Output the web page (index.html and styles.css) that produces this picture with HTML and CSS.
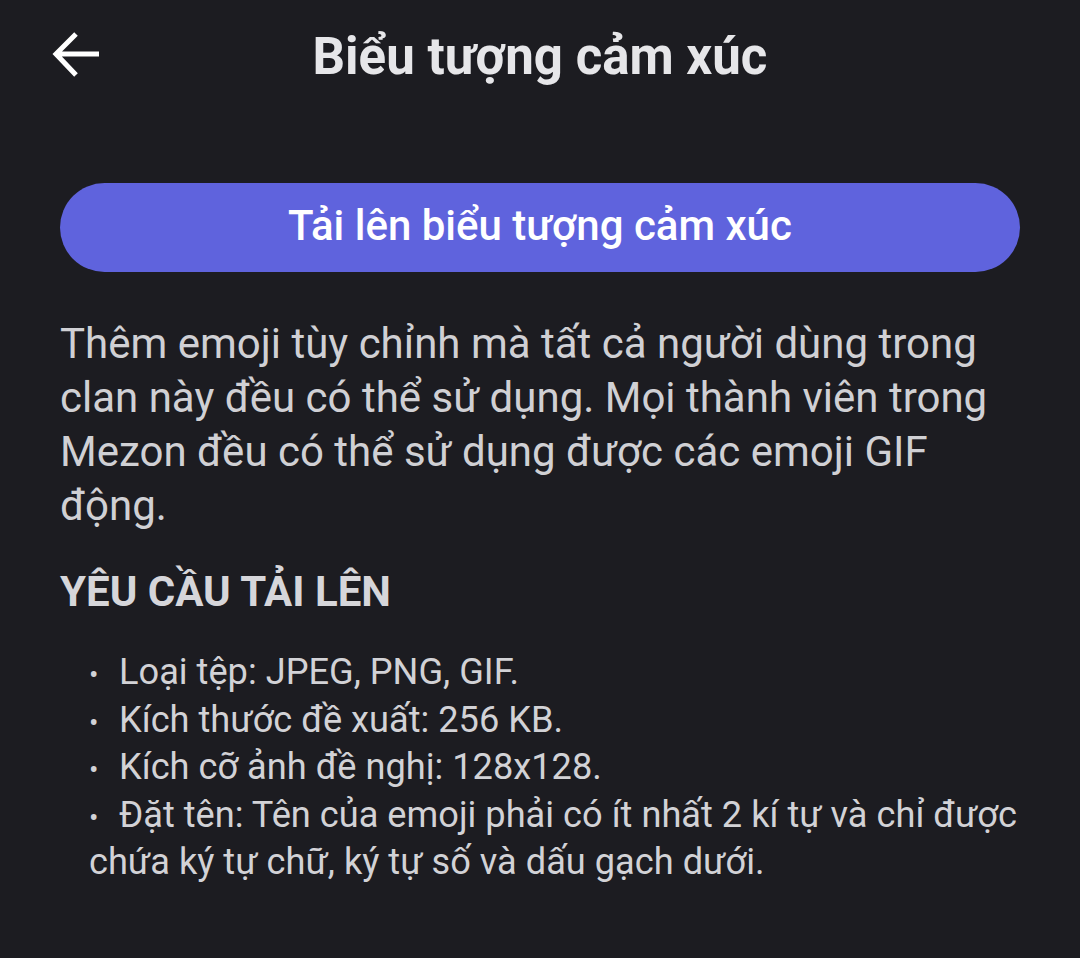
FILE: index.html
```html
<!DOCTYPE html>
<html lang="vi">
<head>
<meta charset="utf-8">
<link rel="stylesheet" href="styles.css">
</head>
<body>
<div class="screen">
  <header class="topbar">
    <button class="back" aria-label="Quay lại">
      <svg width="50" height="48" viewBox="0 0 50 48"><path d="M47 23H6M24 3L4 23L24 44" fill="none" stroke="#ffffff" stroke-width="5" stroke-linecap="butt" stroke-linejoin="miter"/></svg>
    </button>
    <h1 class="title">Biểu tượng cảm xúc</h1>
  </header>
  <main class="content">
    <button class="upload">Tải lên biểu tượng cảm xúc</button>
    <p class="desc">Thêm emoji tùy chỉnh mà tất cả người dùng trong clan này đều có thể sử dụng. Mọi thành viên trong Mezon đều có thể sử dụng được các emoji GIF động.</p>
    <h2 class="req-title">YÊU CẦU TẢI LÊN</h2>
    <ul class="req-list">
      <li class="req-item">Loại tệp: JPEG, PNG, GIF.</li>
      <li class="req-item">Kích thước đề xuất: 256 KB.</li>
      <li class="req-item">Kích cỡ ảnh đề nghị: 128x128.</li>
      <li class="req-item">Đặt tên: Tên của emoji phải có ít nhất 2 kí tự và chỉ được chứa ký tự chữ, ký tự số và dấu gạch dưới.</li>
    </ul>
  </main>
</div>
</body>
</html>
```

FILE: styles.css
```css
html, body {
  margin: 0;
  padding: 0;
  background: #1c1c21;
}
body {
  font-family: Roboto, "Noto Sans", sans-serif;
  width: 1080px;
  height: 958px;
  overflow: hidden;
}
.screen {
  display: flex;
  flex-direction: column;
}
.topbar {
  position: relative;
  height: 115px;
  display: flex;
  align-items: center;
  justify-content: center;
}
.back {
  position: absolute;
  left: 52px;
  top: 31px;
  padding: 0;
  border: 0;
  background: none;
  display: flex;
}
.title {
  margin: 0;
  margin-top: -2px;
  font-size: 51px;
  font-weight: 700;
  color: #e6e6e9;
}
.content {
  padding: 68px 60px 0 60px;
  display: flex;
  flex-direction: column;
}
.upload {
  height: 89px;
  border: 0;
  border-radius: 45px;
  background: #5f63dd;
  color: #ffffff;
  font-family: Roboto, "Noto Sans", sans-serif;
  font-size: 42px;
  font-weight: 500;
  padding: 0;
  padding-bottom: 4px;
}
.desc {
  margin: 45px 0 0 0;
  font-size: 42px;
  line-height: 54px;
  color: #d0d0d4;
}
.req-title {
  margin: 32px 0 0 0;
  font-size: 42px;
  line-height: 54px;
  font-weight: 700;
  color: #d6d6da;
}
.req-list {
  list-style: none;
  margin: 29px 0 0 0;
  padding-left: 29px;
}
.req-item {
  margin: 0;
  font-size: 36.2px;
  line-height: 47.5px;
  color: #d2d2d6;
}
.req-item::before {
  content: "•";
  display: inline-block;
  width: 30px;
  font-size: 28px;
  line-height: 1;
}
```
